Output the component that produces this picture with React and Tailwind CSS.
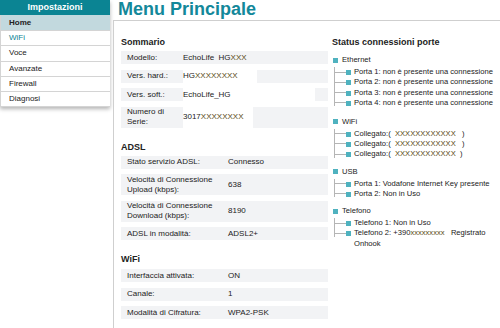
import React from 'react';

const menu = ['Home', 'WiFi', 'Voce', 'Avanzate', 'Firewall', 'Diagnosi'];

const Row = ({ label, value, tall, valueCol, white, whiteW }) => (
  <div className={`flex items-center bg-[#f2f3f5] ${tall ? 'h-[21px]' : 'h-[13px]'}`}>
    <div className={`${valueCol} pl-[6px] shrink-0 leading-[10px]`}>{label}</div>
    {white ? (
      <div className={`bg-white h-full flex items-center ${whiteW}`}>{value}</div>
    ) : (
      <div>{value}</div>
    )}
  </div>
);

const Tree = ({ title, items, gap }) => (
  <div className={gap}>
    <div className="flex items-center h-[10px] gap-[4px]">
      <span className="w-[5px] h-[5px] bg-[#4fb2bf] ml-[1px]" />
      <span>{title}</span>
    </div>
    <div className="ml-[2px] mt-[2px]">
      {items.map((it, i) => {
        const last = i === items.length - 1;
        return (
          <div key={i} className="flex">
            <div className="w-[12px] flex flex-col shrink-0">
              <div className="h-[5.5px] border-l border-b border-[#b5b5b5]" />
              <div className={`${last ? 'h-[3px]' : 'flex-1'} border-l border-[#b5b5b5]`} />
            </div>
            <span className="w-[5px] h-[5px] bg-[#4fb2bf] mt-[3px] shrink-0" />
            <div className="ml-[3px] leading-[10.3px] whitespace-nowrap">{it}</div>
          </div>
        );
      })}
    </div>
  </div>
);

const X = ({ children }) => <span className="text-[#5a4a14]">{children}</span>;

export default function App() {
  return (
    <div className="w-[500px] h-[328px] bg-white flex overflow-hidden text-[8px] text-[#222] font-['Liberation_Sans',Arial,sans-serif]">
      <div className="w-[110px] shrink-0 self-start shadow-[0_2px_4px_rgba(0,0,0,0.3)]">
        <div className="h-[15px] bg-[#0b8493] text-white font-bold text-[9px] flex items-center justify-center">
          Impostazioni
        </div>
        {menu.map((m, i) => (
          <div
            key={m}
            className={`h-[15.3px] flex items-center pl-[8px] border-l border-b border-[#d4d4d4] ${
              i === 0 ? 'bg-[#c2d9de] font-bold h-[16px]' : 'bg-white'
            } ${i === 1 ? 'text-[#0b8493]' : ''}`}
          >
            {m}
          </div>
        ))}
      </div>
      <div className="flex-1 flex flex-col pl-[3px] min-w-0">
        <div className="h-[20px] pl-[5px] text-[18px] font-bold text-[#13889a] leading-[18px]">
          Menu Principale
        </div>
        <div className="flex-1 border-l border-t border-[#cfcfcf] flex pl-[7px] pt-[15px]">
          <div className="w-[207px] shrink-0">
            <div className="font-bold text-[9px] h-[15px]">Sommario</div>
            <div className="flex flex-col gap-[5.5px]">
              <Row label="Modello:" valueCol="w-[62px]" value={<>EchoLife&nbsp; HG<X>XXX</X></>} />
              <Row label="Vers. hard.:" valueCol="w-[62px]" white whiteW="w-[74px]" value={<>HG<X>XXXXXXXX</X></>} />
              <Row label="Vers. soft.:" valueCol="w-[62px]" white whiteW="w-[132px]" value="EchoLife_HG" />
              <Row label={<>Numero di<br />Serie:</>} tall valueCol="w-[62px]" white whiteW="w-[70px]" value={<>3017<X>XXXXXXXX</X></>} />
            </div>
            <div className="font-bold text-[9px] mt-[13px] h-[15px]">ADSL</div>
            <div className="flex flex-col gap-[5.5px]">
              <Row label="Stato servizio ADSL:" valueCol="w-[107px]" value="Connesso" />
              <Row label={<>Velocità di Connessione<br />Upload (kbps):</>} tall valueCol="w-[107px]" value="638" />
              <Row label={<>Velocità di Connessione<br />Download (kbps):</>} tall valueCol="w-[107px]" value="8190" />
              <Row label="ADSL in modalità:" valueCol="w-[107px]" value="ADSL2+" />
            </div>
            <div className="font-bold text-[9px] mt-[13px] h-[16px]">WiFi</div>
            <div className="flex flex-col gap-[5.5px]">
              <Row label="Interfaccia attivata:" valueCol="w-[107px]" value="ON" />
              <Row label="Canale:" valueCol="w-[107px]" value="1" />
              <Row label="Modalità di Cifratura:" valueCol="w-[107px]" value="WPA2-PSK" />
            </div>
          </div>
          <div className="ml-[4px] flex-1 min-w-0 text-[7.6px]">
            <div className="font-bold text-[9px] h-[19px]">Status connessioni porte</div>
            <Tree
              title="Ethernet"
              gap="mb-[8.5px]"
              items={[
                'Porta 1: non è presente una connessione',
                'Porta 2: non è presente una connessione',
                'Porta 3: non è presente una connessione',
                'Porta 4: non è presente una connessione',
              ]}
            />
            <Tree
              title="WiFi"
              gap="mb-[7px]"
              items={[
                <>Collegato:( &nbsp;<X>XXXXXXXXXXXX</X>&nbsp;&nbsp; )</>,
                <>Collegato:( &nbsp;<X>XXXXXXXXXXXX</X>&nbsp;&nbsp; )</>,
                <>Collegato:( &nbsp;<X>XXXXXXXXXXXX</X>&nbsp; )</>,
              ]}
            />
            <Tree
              title="USB"
              gap="mb-[7px]"
              items={['Porta 1: Vodafone Internet Key presente', 'Porta 2: Non in Uso']}
            />
            <Tree
              title="Telefono"
              items={[
                'Telefono 1: Non in Uso',
                <>Telefono 2: +390<X>xxxxxxxxx</X>&nbsp;&nbsp; Registrato<br />Onhook</>,
              ]}
            />
          </div>
        </div>
      </div>
    </div>
  );
}
